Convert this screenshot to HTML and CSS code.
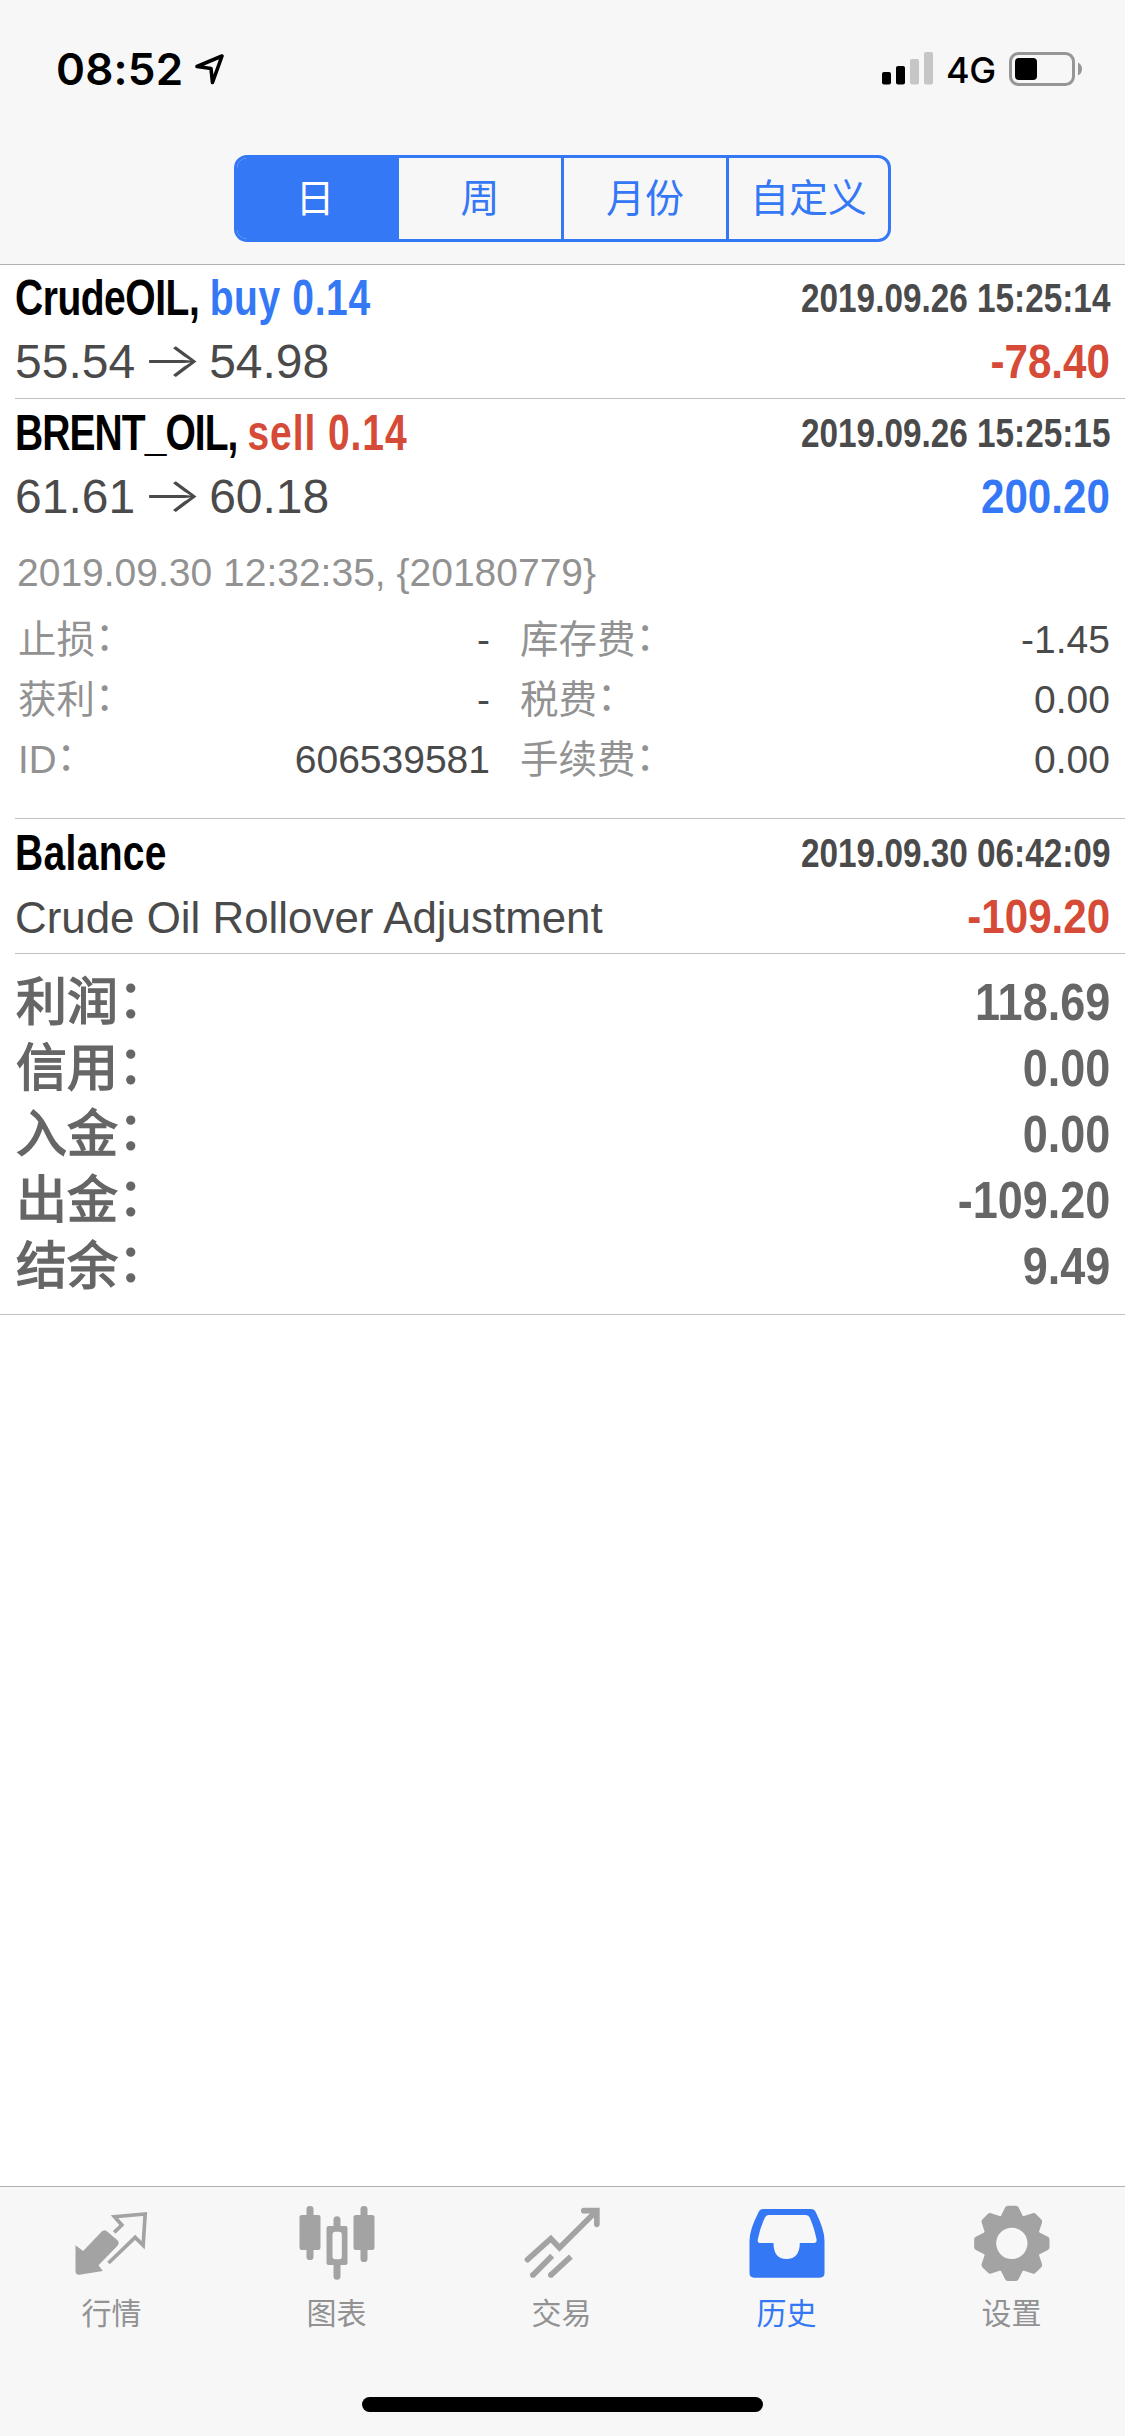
FILE: index.html
```html
<!DOCTYPE html>
<html lang="zh-CN">
<head>
<meta charset="utf-8">
<title>历史</title>
<link rel="stylesheet" href="styles.css">
</head>
<body>
<header class="header">
  <div class="status">
    <div class="status-left">
      <span class="time">08:52</span>
      <svg class="loc" width="34" height="34" viewBox="0 0 34 34"><path d="M4 14.5 29 4 19.5 30.5 18 16.5Z" fill="none" stroke="#000" stroke-width="3.6" stroke-linejoin="round"/></svg>
    </div>
    <div class="status-right">
      <svg width="51" height="34" viewBox="0 0 51 34"><rect y="20" width="9" height="12.500" rx="2"/><rect x="14" y="14" width="9" height="18.500" rx="2"/><rect x="28" y="7" width="9" height="25.500" rx="2" fill="#c6c6c6"/><rect x="42" width="9" height="32.500" rx="2" fill="#c6c6c6"/></svg>
      <span class="net">4G</span>
      <svg class="battery" width="74" height="34" viewBox="0 0 74 34"><rect x="1.500" y="1.500" width="63" height="31" rx="8" fill="none" stroke="#969696" stroke-width="3"/><rect x="6" y="6" width="22" height="22" rx="4"/><path d="M69 10.500Q73 12.500 73 17T69 23.500Z" fill="#969696"/></svg>
    </div>
  </div>
  <nav class="segments">
    <span class="segment segment-on">日</span>
    <span class="segment">周</span>
    <span class="segment">月份</span>
    <span class="segment">自定义</span>
  </nav>
</header>

<main class="list">
  <section class="row">
    <div class="line title-line"><span class="title">CrudeOIL, <span class="side blue">buy 0.14</span></span><span class="date">2019.09.26 15:25:14</span></div>
    <div class="line value-line"><span class="prices">55.54<span class="arrow">→</span>54.98</span><span class="amount red">-78.40</span></div>
  </section>
  <section class="row">
    <div class="line title-line"><span class="title title-caps">BRENT_OIL, <span class="side red">sell 0.14</span></span><span class="date">2019.09.26 15:25:15</span></div>
    <div class="line value-line"><span class="prices">61.61<span class="arrow">→</span>60.18</span><span class="amount blue">200.20</span></div>
    <div class="details">
      <div class="closed">2019.09.30 12:32:35, {20180779}</div>
      <div class="grid">
        <span class="label">止损<span class="colon">：</span></span><span class="value">-</span><span class="label second">库存费<span class="colon">：</span></span><span class="value">-1.45</span>
        <span class="label">获利<span class="colon">：</span></span><span class="value">-</span><span class="label second">税费<span class="colon">：</span></span><span class="value">0.00</span>
        <span class="label">ID<span class="colon">：</span></span><span class="value">606539581</span><span class="label second">手续费<span class="colon">：</span></span><span class="value">0.00</span>
      </div>
    </div>
  </section>
  <section class="row">
    <div class="line title-line"><span class="title title-plain">Balance</span><span class="date">2019.09.30 06:42:09</span></div>
    <div class="line value-line"><span class="comment">Crude Oil Rollover Adjustment</span><span class="amount red">-109.20</span></div>
  </section>
  <section class="summary">
    <div class="total"><span class="name">利润<span class="colon">：</span></span><span class="sum">118.69</span></div>
    <div class="total"><span class="name">信用<span class="colon">：</span></span><span class="sum">0.00</span></div>
    <div class="total"><span class="name">入金<span class="colon">：</span></span><span class="sum">0.00</span></div>
    <div class="total"><span class="name">出金<span class="colon">：</span></span><span class="sum">-109.20</span></div>
    <div class="total"><span class="name">结余<span class="colon">：</span></span><span class="sum">9.49</span></div>
  </section>
</main>

<footer class="footer">
  <nav class="tabs">
    <div class="tab">
      <svg class="icon" viewBox="202.5 102 270 234"><path fill="currentColor" d="M225 226 248 243 303 185Q312 176 321 185L351 211Q358 219 351 227L294 286 307 303 237 314Q225 315 225 303Z"/><path fill="none" stroke="currentColor" stroke-width="11" d="M341 187 364 165 342 140 434 132 428 226 404 202 324 279"/></svg>
      <span>行情</span>
    </div>
    <div class="tab">
      <svg class="icon" viewBox="877.5 102 270 234" fill="currentColor"><rect x="897" y="135" width="63" height="105" rx="7"/><rect x="918" y="108" width="21" height="162" rx="10"/><rect x="1059" y="135" width="63" height="105" rx="7"/><rect x="1080" y="108" width="21" height="168" rx="10"/><path d="M999 170V149a10.500 10.500 0 0 1 21 0V168H1035Q1041 168 1041 174V279Q1041 285 1035 285H1020V319a10.500 10.500 0 0 1-21 0V285H984Q978 285 978 279V174Q978 168 984 168H999ZM1004 185Q996 185 996 195V258Q996 268 1004 268H1016Q1024 268 1024 258V195Q1024 185 1016 185Z" fill-rule="evenodd"/></svg>
      <span>图表</span>
    </div>
    <div class="tab">
      <svg class="icon" viewBox="202.5 102 270 234" fill="none" stroke="currentColor" stroke-width="17"><path stroke-linecap="round" d="M231 269 301 206 327 233 437 124M400 122H439V163"/><path d="M305 257 247 316M361 260 300 316"/><g fill="currentColor" stroke="none"><circle cx="247" cy="315" r="8.500"/><circle cx="301" cy="315" r="8.500"/></g></svg>
      <span>交易</span>
    </div>
    <div class="tab tab-on">
      <svg class="icon" viewBox="877.5 102 270 234" fill="currentColor"><path fill-rule="evenodd" d="M938 117H1082Q1091 117 1096 127 1122 180 1122 212V309Q1122 323 1108 323H911Q897 323 897 309V212Q897 180 924 127 929 117 938 117ZM955 135Q946 135 943 143 930 170 922 207 919 219 931 219H969Q969 267 1008 267T1048 219H1090Q1100 219 1098 207 1090 170 1078 143 1075 135 1066 135Z"/></svg>
      <span>历史</span>
    </div>
    <div class="tab">
      <svg class="icon" viewBox="-131.5 -118 270 234" fill="currentColor" stroke="currentColor" stroke-width="18" stroke-linejoin="round"><circle r="68" fill="none" stroke-width="42"/><path id="tooth" d="M-12-104H12L23-82H-23Z"/><use href="#tooth" transform="rotate(45)"/><use href="#tooth" transform="rotate(90)"/><use href="#tooth" transform="rotate(135)"/><use href="#tooth" transform="rotate(180)"/><use href="#tooth" transform="rotate(225)"/><use href="#tooth" transform="rotate(270)"/><use href="#tooth" transform="rotate(315)"/></svg>
      <span>设置</span>
    </div>
  </nav>
  <div class="home"></div>
</footer>
</body>
</html>
```
FILE: styles.css
```css
* { box-sizing: border-box; }

body {
  margin: 0;
  width: 1125px;
  height: 2436px;
  display: flex;
  flex-direction: column;
  background: #fff;
  color: #4a4a4b;
  font-family: "Liberation Sans", "Noto Sans CJK SC", sans-serif;
  white-space: nowrap;
}

svg { display: block; flex: none; }

.header {
  height: 265px;
  flex: none;
  background: #f7f7f8;
  border-bottom: 1px solid #b2b2b2;
}

.status {
  height: 155px;
  padding: 52px 42px 0 56px;
  display: flex;
  justify-content: space-between;
  color: #000;
  font-family: Inter, sans-serif;
}

.status-left, .status-right { display: flex; align-items: flex-start; }
.time { font-size: 44px; font-weight: 600; line-height: 35px; width: 137px; letter-spacing: 0.2px; }
.net { font-size: 36px; font-weight: 500; line-height: 37px; width: 76px; padding-left: 13px; letter-spacing: -0.5px; }

.segments {
  width: 657px;
  height: 87px;
  margin: 0 auto;
  border: 3px solid #3478f6;
  border-radius: 13px;
  overflow: hidden;
  display: grid;
  grid-template-columns: 159px 165px 165px 1fr;
  color: #3478f6;
  font-size: 39px;
}

.segment { display: flex; align-items: center; justify-content: center; padding-bottom: 7px; border-left: 3px solid #3478f6; }
.segment-on { background: #3478f6; border-left: 0; padding-right: 3px; color: #fff; }

.list { flex: 1; margin-top: -1px; }

.row {
  margin-left: 15px;
  min-height: 135px;
  padding: 2px 15px 0 0;
  border-bottom: 1px solid #c0c0c2;
}

.line { display: flex; justify-content: space-between; align-items: center; }
.title-line { height: 63px; line-height: 63px; }
.value-line { height: 64px; line-height: 64px; }

.title { font-size: 50px; font-weight: 700; color: #000; padding-top: 1px; letter-spacing: -0.6px; transform: scaleX(0.78); transform-origin: left; }
.title-caps { letter-spacing: -1.200px; }
.title-plain { letter-spacing: 0.4px; }
.side { letter-spacing: 0.8px; }
.title-caps .side { letter-spacing: 1.200px; }
.date { font-size: 40px; font-weight: 700; padding-top: 1px; transform: scaleX(0.833); transform-origin: right; }
.prices { font-size: 48px; }
.arrow { display: inline-block; width: 74px; text-align: center; font-family: Inter, sans-serif; font-weight: 300; transform: translateY(-1px) scaleX(1.35); }
.amount { font-size: 49px; font-weight: 700; transform: scaleX(0.86); transform-origin: right; }
.comment { font-size: 45px; padding-top: 3px; transform: scaleX(0.975); transform-origin: left; }
.blue { color: #3478f6; }
.red { color: #d54b37; }

.details { padding: 15px 0 28px 2px; font-size: 39px; line-height: 60px; }
.closed { margin-bottom: 7px; color: #929292; }
.grid { display: grid; grid-template-columns: 150px 323px 1fr auto; }
.label { color: #929292; padding-left: 1px; font-size: 38.500px; }
.second { padding-left: 30px; }
.value { text-align: right; }
.colon { display: inline-block; transform: translate(0, -3px); }

.summary {
  height: 361px;
  padding: 15px 15px 0;
  border-bottom: 1px solid #c0c0c2;
  color: #666;
  font-weight: 700;
}

.total { display: flex; justify-content: space-between; height: 66px; line-height: 66px; font-size: 51px; }
.name { padding-top: 1px; padding-left: 1px; font-weight: 400; -webkit-text-stroke: 1.500px #666; }
.sum { font-size: 52px; transform: scaleX(0.865); transform-origin: right; }

.footer { height: 250px; flex: none; background: #f7f7f8; border-top: 1px solid #b2b2b2; }
.tabs { display: grid; grid-template-columns: repeat(5, 225px); height: 210px; padding-top: 17px; }
.tab { display: flex; flex-direction: column; align-items: center; color: #929292; font-size: 30px; line-height: 40px; gap: 12px; }
.tab span { padding-right: 2px; }
.tab .icon { color: #a3a3a3; }
.tab-on, .tab-on .icon { color: #3478f6; }
.icon { width: 90px; height: 78px; }
.home { width: 401px; height: 15px; margin: 0 auto; border-radius: 8px; background: #000; }
```
